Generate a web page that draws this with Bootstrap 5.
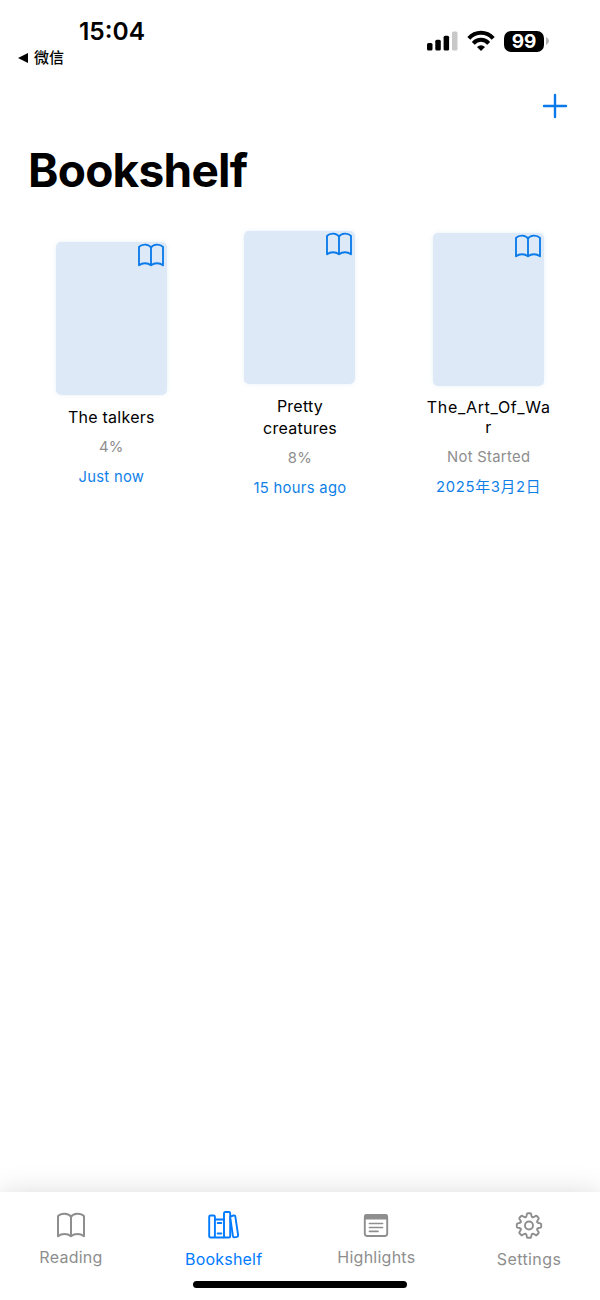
<!DOCTYPE html>
<html lang="en">
<head>
<meta charset="utf-8">
<meta name="viewport" content="width=device-width, initial-scale=1">
<title>Bookshelf</title>
<link href="https://cdn.jsdelivr.net/npm/bootstrap@5.3.0/dist/css/bootstrap.min.css" rel="stylesheet">
<style>
:root{--accent:#007aff;--muted:#8e8e8e}
body{font-family:Inter,"Noto Sans CJK SC",sans-serif;color:#000;background:#fff;height:1300px;overflow:hidden}
svg{display:block;flex:none}
.accent{color:#0a7aea}
.status{height:80px;padding:17px 53px 0 17px}
.clock{font-size:24.5px;font-weight:600;line-height:28px;margin-left:62px;letter-spacing:0}
.back-app{font-size:15px;line-height:20px;margin-top:3px;font-weight:500;gap:5px}
.signals{margin-top:12px;height:24px}
.batt{width:40px;height:21px;border-radius:7px;background:#000;color:#fff;font-size:19px;font-weight:700;line-height:21px;text-align:center}
.nub{margin-left:2px;margin-right:-2px}
.toolbar{height:54px;padding:13px 32px 0}
.page-title{font-size:46px;font-weight:700;line-height:56px;letter-spacing:-.75px;margin:8px 0 0 28px}
.shelf{padding:0 17px;margin-top:33px}
.cover{width:111px;height:153px;border-radius:5px;background:#dde9f7;box-shadow:0 0 5px rgba(60,130,210,.1)}
.cover svg{position:absolute;right:2px;top:1px}
.title{font-size:16px;line-height:22px;margin-top:11px;letter-spacing:.25px}
.title.tight{line-height:20.5px;letter-spacing:.7px}
.info{font-size:14.8px;line-height:20px;letter-spacing:.3px;color:var(--muted);margin-top:10px}
.title+.info{margin-top:9px}
.info.accent{color:#0f7fe8}
.date{letter-spacing:.7px}
.tabs{height:108px;box-shadow:0 3px 28px 0 rgba(0,0,0,.17)}
.tab{width:152.7px;color:var(--muted);font-size:16px;line-height:20px;letter-spacing:.25px;padding-top:17px}
.tab span{margin-top:6px}
.tab.low span{margin-top:8px}
.tab.wider{letter-spacing:.4px}
.tab.current{color:var(--accent);letter-spacing:.2px}
.home-bar{position:absolute;left:193px;bottom:12px;width:214px;height:7px;border-radius:4px;background:#000}
</style>
</head>
<body class="d-flex flex-column">
<svg width="0" height="0" class="position-absolute">
  <symbol id="book" viewBox="0 0 30 26"><path d="M15 4.800C12.500 .800 5 .800 2 4.200V24.200C5.500 21.200 11.500 21.200 15 24.200C18.500 21.200 24.500 21.200 28 24.200V4.200C25 .800 17.500 .800 15 4.800ZM15 4.800V24" fill="none" stroke="currentColor" stroke-width="2" stroke-linejoin="round" stroke-linecap="round"/></symbol>
</svg>

<header class="status d-flex justify-content-between flex-shrink-0">
  <div>
    <div class="clock">15:04</div>
    <div class="back-app d-flex align-items-center">
      <svg width="12" height="12"><path d="M1 6L11 1V11Z"/></svg><span>微信</span>
    </div>
  </div>
  <div class="signals d-flex align-items-center">
    <svg width="31" height="20" viewBox="0 0 31 20"><rect y="12" width="5.500" height="7.500" rx="1.500"/><rect x="8.300" y="8.700" width="5.500" height="10.800" rx="1.500"/><rect x="16.600" y="4.800" width="5.500" height="14.700" rx="1.500"/><rect x="25" y=".500" width="5.500" height="19" rx="1.500" fill="#c8c8c8"/></svg>
    <svg class="ms-2 me-2" width="30" height="22" viewBox="0 0 30 22"><g fill="none" stroke="#000" stroke-width="4"><path d="M2.800 8.400C9.500 .900 20.500 .900 27.200 8.400"/><path d="M7.300 13.300C11.600 8.700 18.400 8.700 22.700 13.300"/></g><path d="M11 17Q15 13.500 19 17L15 21Z"/></svg>
    <div class="batt">99</div>
    <svg class="nub" width="3" height="8"><path d="M0 0Q3 1.500 3 4T0 8Z" fill="#b5b5b5"/></svg>
  </div>
</header>

<div class="toolbar d-flex justify-content-end">
  <svg width="26" height="26" viewBox="0 0 26 26"><path d="M13 2V24M2 13H24" stroke="#0a7aea" stroke-width="2.400" stroke-linecap="round"/></svg>
</div>
<h1 class="page-title">Bookshelf</h1>

<main class="shelf flex-grow-1">
  <div class="row g-0 align-items-center text-center">
    <div class="col-4">
      <div class="cover position-relative mx-auto"><svg class="accent" width="28" height="24"><use href="#book"/></svg></div>
      <div class="title">The talkers</div>
      <div class="info">4%</div>
      <div class="info accent">Just now</div>
    </div>
    <div class="col-4">
      <div class="cover position-relative mx-auto"><svg class="accent" width="28" height="24"><use href="#book"/></svg></div>
      <div class="title">Pretty<br>creatures</div>
      <div class="info">8%</div>
      <div class="info accent">15 hours ago</div>
    </div>
    <div class="col-4">
      <div class="cover position-relative mx-auto"><svg class="accent" width="28" height="24"><use href="#book"/></svg></div>
      <div class="title tight">The_Art_Of_Wa<br>r</div>
      <div class="info">Not Started</div>
      <div class="info accent date">2025年3月2日</div>
    </div>
  </div>
</main>

<nav class="tabs position-relative bg-white flex-shrink-0 d-flex justify-content-center">
  <div class="tab flex-shrink-0 d-flex flex-column align-items-center">
    <svg width="30" height="32" viewBox="0 -3 30 32"><use href="#book" width="30" height="26"/></svg>
    <span>Reading</span>
  </div>
  <div class="tab current low flex-shrink-0 d-flex flex-column align-items-center">
    <svg width="32" height="32" viewBox="0 0 32 32" fill="none" stroke="currentColor" stroke-width="1.900" stroke-linejoin="round" stroke-linecap="round"><rect x="1.200" y="6.500" width="5.700" height="22" rx="1.300"/><path d="M6.900 10.500H16M6.900 28.500H16M9.700 14H13.300M9.700 24.500H13.300"/><rect x="16" y="3" width="6.200" height="25.500" rx="1.300"/><path d="M22.200 7.700L25.500 6.500Q27 6.100 27.300 7.400L30.100 26Q30.300 27.600 29 27.900L26.500 28.400Q25.200 28.500 24.900 27L22.400 10"/></svg>
    <span>Bookshelf</span>
  </div>
  <div class="tab flex-shrink-0 d-flex flex-column align-items-center">
    <svg width="26" height="32" viewBox="0 0 26 32" fill="none" stroke="currentColor" stroke-width="1.900" stroke-linecap="round"><rect x="1.800" y="6" width="22.400" height="21" rx="2.500"/><path d="M2 9.500V8Q2 6 4 6H22Q24 6 24 8V9.500Z" fill="currentColor"/><path d="M6.500 14.500H19.500M6.500 18.500H19.500M6.500 22.300H15" stroke-width="1.700"/></svg>
    <span>Highlights</span>
  </div>
  <div class="tab low wider flex-shrink-0 d-flex flex-column align-items-center">
    <svg width="30" height="32" viewBox="-15 -16.500 30 32" fill="none" stroke="currentColor" stroke-width="1.900" stroke-linejoin="round" stroke-linecap="round"><circle r="4"/>
      <g id="quarter"><path id="cog" d="M-3.440-8.310Q-2.700-8.700-2.500-9.500L-2.150-11.400Q-1.950-12.200-1.200-12.200H1.200Q1.950-12.200 2.150-11.400L2.500-9.500Q2.700-8.700 3.440-8.310"/><use href="#cog" transform="rotate(45)"/></g>
      <use href="#quarter" transform="rotate(90)"/><use href="#quarter" transform="rotate(180)"/><use href="#quarter" transform="rotate(270)"/>
    </svg>
    <span>Settings</span>
  </div>
  <div class="home-bar"></div>
</nav>
<script src="https://cdn.jsdelivr.net/npm/bootstrap@5.3.0/dist/js/bootstrap.bundle.min.js"></script>
</body>
</html>
